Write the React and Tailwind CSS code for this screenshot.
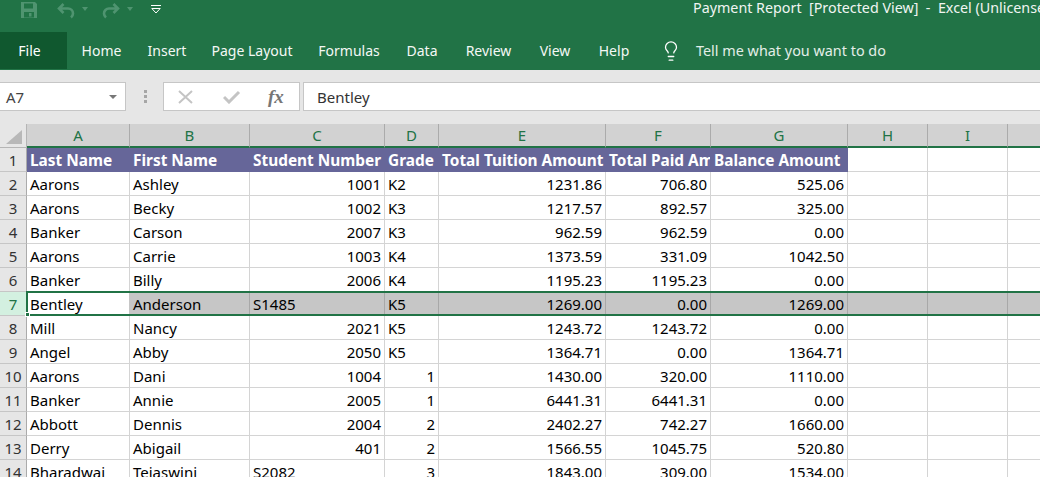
import React from "react";
import { Lightbulb } from "lucide-react";

const font = "font-['Noto_Sans',sans-serif]";
const cols = [
  ["A", "w-[103px]"], ["B", "w-[120px]"], ["C", "w-[135px]"], ["D", "w-[54px]"],
  ["E", "w-[167px]"], ["F", "w-[105px]"], ["G", "w-[137px]"], ["H", "w-[80px]"], ["I", "w-[80px]"], ["", "w-[60px]"],
];
const aligns = ["l", "l", "r", "l", "r", "r", "r"];
const head = ["Last Name", "First Name", "Student Number", "Grade", "Total Tuition Amount", "Total Paid Amount", "Balance Amount"];
const rows = [
  ["Aarons", "Ashley", "1001", "K2", "1231.86", "706.80", "525.06"],
  ["Aarons", "Becky", "1002", "K3", "1217.57", "892.57", "325.00"],
  ["Banker", "Carson", "2007", "K3", "962.59", "962.59", "0.00"],
  ["Aarons", "Carrie", "1003", "K4", "1373.59", "331.09", "1042.50"],
  ["Banker", "Billy", "2006", "K4", "1195.23", "1195.23", "0.00"],
  ["Bentley", "Anderson", "S1485", "K5", "1269.00", "0.00", "1269.00"],
  ["Mill", "Nancy", "2021", "K5", "1243.72", "1243.72", "0.00"],
  ["Angel", "Abby", "2050", "K5", "1364.71", "0.00", "1364.71"],
  ["Aarons", "Dani", "1004", "1", "1430.00", "320.00", "1110.00"],
  ["Banker", "Annie", "2005", "1", "6441.31", "6441.31", "0.00"],
  ["Abbott", "Dennis", "2004", "2", "2402.27", "742.27", "1660.00"],
  ["Derry", "Abigail", "401", "2", "1566.55", "1045.75", "520.80"],
  ["Bharadwaj", "Tejaswini", "S2082", "3", "1843.00", "309.00", "1534.00"],
];
const cellAlign = (v, i) => {
  if (i === 2 && v.startsWith("S")) return "l";
  if (i === 3 && !v.startsWith("K")) return "r";
  return aligns[i];
};
const tabs = [
  ["Home", "w-[41px]"], ["Insert", "w-[36px]"], ["Page Layout", "w-[80px]"], ["Formulas", "w-[60px]"],
  ["Data", "w-[32px]"], ["Review", "w-[47px]"], ["View", "w-[32px]"], ["Help", "w-[32px]"],
];

function Ribbon() {
  return (
    <div className="bg-[#217346] text-white h-[70px] flex flex-col">
      <div className="h-[32px] flex relative">
        <div className="flex items-start pl-[21px] pt-[2px] text-[#4f9470]">
          <svg width="16" height="16" viewBox="0 0 16 16">
            <path d="M0 0h14l2 2v14H0z M3 1.5v5h9v-5z M3 10v5.5h10V10z M8 11h2.5v3.5H8z" fill="currentColor" fillRule="evenodd" />
          </svg>
          <svg width="18" height="16" viewBox="0 0 18 16" className="ml-[20px] mt-[1px]" fill="none" stroke="currentColor" strokeWidth="2.6">
            <path d="M6.5 1 2 5.5 6.5 10M2 5.5h9a5 5 0 0 1 5 5c0 1.800-.8 3-2 4" />
          </svg>
          <svg width="6" height="4" viewBox="0 0 6 4" className="ml-[7px] mt-[5px]"><path d="M0 0h6L3 4z" fill="currentColor" /></svg>
          <svg width="18" height="16" viewBox="0 0 18 16" className="ml-[14px] mt-[1px]" fill="none" stroke="currentColor" strokeWidth="2.6">
            <path d="M11.500 1 16 5.500 11.500 10M16 5.500H7a5 5 0 0 0-5 5c0 1.800.8 3 2 4" />
          </svg>
          <svg width="6" height="4" viewBox="0 0 6 4" className="ml-[7px] mt-[5px]"><path d="M0 0h6L3 4z" fill="currentColor" /></svg>
          <svg width="10" height="9" viewBox="0 0 10 9" className="ml-[18px] mt-[3px]" fill="none" stroke="#fff" strokeWidth="1">
            <path d="M0 .5h10M.8 3.500h8.400L5 8z" />
          </svg>
        </div>
        <div className="ml-auto w-[347px] shrink-0 whitespace-pre text-[14.3px] leading-[16px] text-[#f0f5f2] overflow-hidden">
          Payment Report  [Protected View]  -  Excel (Unlicensed Product)
        </div>
      </div>
      <div className="h-[38px] flex items-start text-[14px]">
        <div className="w-[67px] h-[37px] bg-[#10582f] flex items-center justify-center pr-[8px]">File</div>
        <div className="flex gap-[27px] ml-[14px] h-[37px] items-center text-[#f4f8f5]">
          {tabs.map(([t, w]) => <span key={t} className={`${w} whitespace-nowrap flex justify-center`}>{t}</span>)}
        </div>
        <div className="flex items-center h-[37px] ml-[30px] text-[#e3eee8]">
          <Lightbulb size={22} strokeWidth={1.4} className="text-white" />
          <span className="ml-[14px] text-[14.4px]">Tell me what you want to do</span>
        </div>
      </div>
    </div>
  );
}

function FormulaBar() {
  return (
    <div className="h-[54px] bg-[#e6e6e6] pt-[12px] flex items-start text-[15px] text-[#444]">
      <div className="w-[126px] h-[29px] bg-white border border-[#c6c6c6] border-l-0 flex items-center pl-[6px] pr-[8px] pt-[1px] justify-between">
        <span>A7</span>
        <svg width="8" height="4" viewBox="0 0 8 4"><path d="M0 0h8L4 4z" fill="#777" /></svg>
      </div>
      <div className="w-[37px] h-[29px] flex flex-col items-center justify-center gap-[2px] pl-[2px]">
        <i className="block w-[3px] h-[3px] bg-[#a6a6a6]" />
        <i className="block w-[3px] h-[3px] bg-[#a6a6a6]" />
        <i className="block w-[3px] h-[3px] bg-[#a6a6a6]" />
      </div>
      <div className="w-[137px] h-[29px] bg-white border border-[#c6c6c6] flex items-center pl-[14px]">
        <svg width="16" height="14" viewBox="0 0 16 14" fill="none" stroke="#c4c4c4" strokeWidth="2"><path d="m1 1 13 12M14 1 1 13" /></svg>
        <svg width="18" height="14" viewBox="0 0 18 14" fill="none" stroke="#c4c4c4" strokeWidth="3" className="ml-[29px]"><path d="m1 7 5 5L16 2" /></svg>
        <span className="ml-[27px] font-['Liberation_Serif',serif] italic text-[#777] text-[19px] leading-none font-bold">fx</span>
      </div>
      <div className="w-[3px]" />
      <div className="flex-1 h-[29px] bg-white border border-[#c6c6c6] border-r-0 flex items-center pl-[13px] pt-[1px] text-[#333]">Bentley</div>
    </div>
  );
}

function Sheet() {
  return (
    <div className="text-[15px] text-black relative">
      <div className="flex h-[24px]">
        <div className="w-[27px] shrink-0 bg-[#e6e6e6] border-r border-b border-[#b5b5b5] flex items-end justify-end pr-[4px] pb-[3px]">
          <svg width="16" height="14" viewBox="0 0 16 14"><path d="M16 0v14H0z" fill="#b8b8b8" /></svg>
        </div>
        {cols.map(([c, w], i) => (
          <div key={i} className={`${w} shrink-0 bg-[#d2d2d2] border-r border-[#ababab] border-b-2 border-b-[#217346] flex items-center justify-center text-[#217346] text-[15px]`}>{c}</div>
        ))}
      </div>
      <Row n={1} cells={head} header />
      {rows.map((r, i) => <Row key={i} n={i + 2} cells={r} selected={i === 5} />)}
    </div>
  );
}

function Row({ n, cells, header, selected }) {
  return (
    <div className={`flex h-[24px] ${selected ? "relative" : ""}`}>
      <div className={`w-[27px] shrink-0 border-r border-b flex items-center justify-center pt-[2px] ${selected ? "bg-[#d3f0e0] text-[#217346] border-r-[#217346] border-b-[#c6c6c6]" : "bg-[#e6e6e6] text-[#333] border-[#ababab] border-b-[#c6c6c6]"}`}>{n}</div>
      {cols.map(([, w], i) => {
        const v = cells[i] ?? "";
        const isHead = header && i < 7;
        const bg = isHead ? "bg-[#666699] text-white font-bold text-[15.4px] border-[#666699]" : selected ? (i === 0 ? "bg-white border-[#c6c6c6]" : "bg-[#c6c6c6] border-[#a8a8a8]") : "bg-white border-[#d4d4d4]";
        const right = !isHead && i < 7 && cellAlign(v, i) === "r";
        return (
          <div key={i} className={`${w} shrink-0 border-r border-b overflow-hidden whitespace-nowrap flex items-center pt-[2px] ${right ? "justify-end pr-[3px]" : "pl-[3px]"} ${bg}`}>{v}</div>
        );
      })}
      {selected && (
        <>
          <div className="absolute left-[26px] right-0 top-[-1px] bottom-0 border-y-2 border-l-2 border-[#217346] pointer-events-none" />
          <div className="absolute left-[25px] bottom-[-1px] w-[5px] h-[5px] bg-[#217346] border border-white" />
        </>
      )}
    </div>
  );
}

export default function App() {
  return (
    <div className={`w-[1040px] h-[477px] overflow-hidden bg-white ${font}`}>
      <Ribbon />
      <FormulaBar />
      <Sheet />
    </div>
  );
}
